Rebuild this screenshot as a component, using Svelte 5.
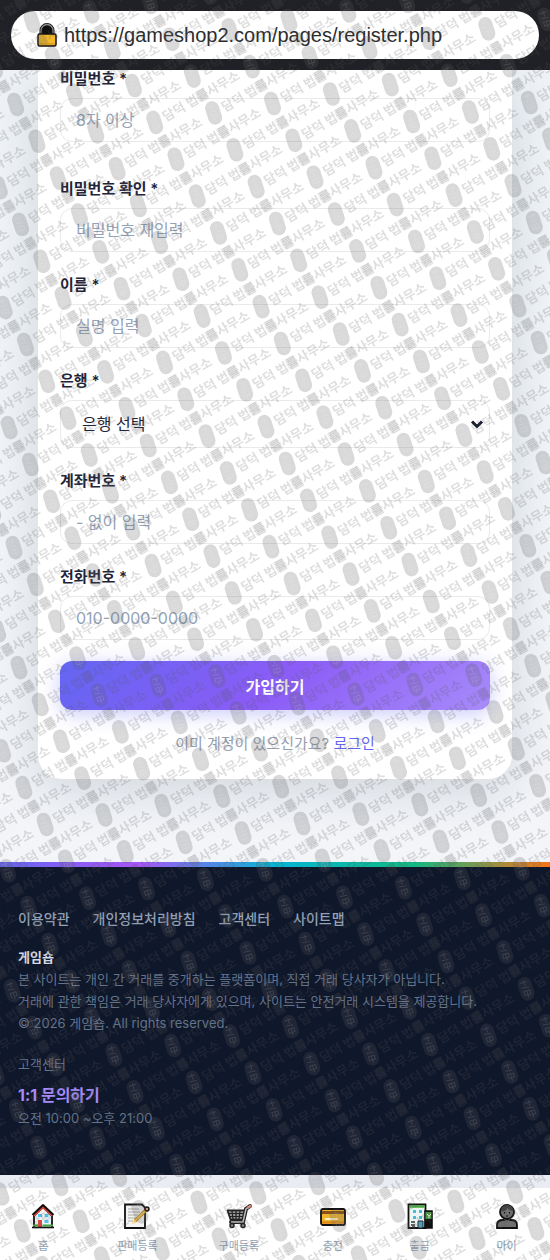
<script lang="ts">
	type Field = {
		id: string;
		label: string;
		type: string;
		placeholder?: string;
		options?: string[];
		spaced?: boolean;
	};

	const fields: Field[] = [
		{ id: "password", label: "비밀번호 *", type: "password", placeholder: "8자 이상", spaced: true },
		{ id: "password-confirm", label: "비밀번호 확인 *", type: "password", placeholder: "비밀번호 재입력" },
		{ id: "name", label: "이름 *", type: "text", placeholder: "실명 입력" },
		{ id: "bank", label: "은행 *", type: "select", options: ["은행 선택"] },
		{ id: "account", label: "계좌번호 *", type: "text", placeholder: "- 없이 입력" },
		{ id: "phone", label: "전화번호 *", type: "tel", placeholder: "010-0000-0000" },
	];

	const footerLinks = ["이용약관", "개인정보처리방침", "고객센터", "사이트맵"];

	const tabs = [
		{ icon: "home", label: "홈" },
		{ icon: "memo", label: "판매등록" },
		{ icon: "cart", label: "구매등록" },
		{ icon: "card", label: "충전" },
		{ icon: "bank", label: "출금" },
		{ icon: "user", label: "마이" },
	];

	// stamps repeat along two directions: one step right, one step down
	const stepRight = { x: 58.9, y: -9.45 };
	const stepDown = { x: 21.27, y: 36.85 };

	let width = $state(550);
	let height = $state(1260);

	function stampsFor(w: number, h: number) {
		const stamps: { x: number; y: number }[] = [];
		const reach = Math.ceil((w + h) / 30);
		for (let right = -reach; right <= reach; right++) {
			for (let down = -reach; down <= reach; down++) {
				const x = 32 + right * stepRight.x + down * stepDown.x;
				const y = 21.3 + right * stepRight.y + down * stepDown.y;
				if (x > -90 && x < w + 8 && y > -12 && y < h + 50) stamps.push({ x, y });
			}
		}
		return stamps;
	}

	const stamps = $derived(stampsFor(width, height));
</script>

<svelte:window bind:innerWidth={width} bind:innerHeight={height} />

<header class="address">
	<div class="address-pill">
		<svg class="lock" viewBox="0 0 20 24" aria-hidden="true">
			<path d="M4.5 12V7.5a5.5 5.5 0 0 1 11 0V12" fill="#111" stroke="#111" stroke-width="4" />
			<path d="M4 12V7.5a6 6 0 0 1 12 0V12" fill="none" stroke="#8b8b8b" stroke-width="1.3" />
			<rect x="1" y="11" width="18" height="12" rx="1.5" fill="#f2b92b" stroke="#111" stroke-width="1.5" />
			<path d="M2 21h16" stroke="#dfa424" stroke-width="2" />
		</svg>
		<span>https://gameshop2.com/pages/register.php</span>
	</div>
</header>

<main>
	<form class="card">
		{#each fields as field}
			<div class="field" class:spaced={field.spaced}>
				<label for={field.id}>{field.label}</label>
				{#if field.options}
					<div class="select-wrap">
						<select id={field.id}>
							{#each field.options as option}
								<option>{option}</option>
							{/each}
						</select>
						<svg class="chevron" viewBox="0 0 14 10" aria-hidden="true">
							<path d="M2 2.5l5 5 5-5" />
						</svg>
					</div>
				{:else}
					<input id={field.id} type={field.type} placeholder={field.placeholder} />
				{/if}
			</div>
		{/each}
		<button type="button" class="submit">가입하기</button>
		<p class="login">이미 계정이 있으신가요? <a href="#login">로그인</a></p>
	</form>
</main>

<footer>
	<nav class="links" aria-label="이용 안내">
		{#each footerLinks as link}
			<a href="#info">{link}</a>
		{/each}
	</nav>
	<div class="about">
		<strong>게임숍</strong>
		<p>본 사이트는 개인 간 거래를 중개하는 플랫폼이며, 직접 거래 당사자가 아닙니다.</p>
		<p>거래에 관한 책임은 거래 당사자에게 있으며, 사이트는 안전거래 시스템을 제공합니다.</p>
		<p>© 2026 게임숍. All rights reserved.</p>
	</div>
	<div class="support">
		<p>고객센터</p>
		<a href="#contact">1:1 문의하기</a>
		<p>오전 10:00 ~오후 21:00</p>
	</div>
</footer>

<nav class="tabs" aria-label="메뉴">
	{#each tabs as tab}
		<a href={`#${tab.icon}`}>
			<svg viewBox="0 0 26 26" aria-hidden="true">
				{#if tab.icon === "home"}
					<path d="M4 12v12h18V12L13 3z" fill="#eef3f5" />
					<path d="M4 24V13M22 24V13" stroke="#111" stroke-width="1.8" />
					<path d="M3 12.5L13 3l10 9.5" fill="none" stroke="#111" stroke-width="3.6" stroke-linejoin="round" />
					<path d="M4 13l9-8.5L22 13" fill="none" stroke="#e4483a" stroke-width="1.6" />
					<path d="M8 11h4v3H8zM14.5 11h4v3h-4zM14.5 17h4v3h-4z" fill="#58c4ee" />
					<path d="M8 17h4v7H8z" fill="#e4483a" />
					<path d="M3 22.5h5M12.5 22.5H23" stroke="#3fa83f" stroke-width="1.8" />
					<path d="M2 24.5h22" stroke="#111" stroke-width="1.6" />
				{:else if tab.icon === "memo"}
					<path d="M1 1.5h17l3 3V25H1z" fill="#f4f4f2" stroke="#111" stroke-width="1.8" />
					<path d="M4 6h11M4 9h12M4 12h10M4 15h8M4 18h5" stroke="#a8a8a8" />
					<path d="M22.5 6.5L11 18" stroke="#a9782a" stroke-width="3.4" />
					<path d="M22.5 6.5L10 19" stroke="#f1bc3c" stroke-width="2.4" />
					<path d="M8 21l1-4 3 3z" fill="#f3d9a0" />
					<circle cx="23" cy="6" r="2" fill="#d9928c" stroke="#111" stroke-width="1.4" />
				{:else if tab.icon === "cart"}
					<path d="M1.5 7.5H19l-2 9H4.5z" fill="#c5c5c5" stroke="#222" stroke-width="1.8" stroke-linejoin="round" />
					<path d="M3 10.5h15M4 13.5h13M6 8l1 8M10 8v8M14 8l-1 8" stroke="#222" stroke-width="1.3" />
					<path d="M24 3l-4 3-3 13H5" fill="none" stroke="#222" stroke-width="4" stroke-linecap="round" />
					<path d="M24 3l-4 3-3 13H5" fill="none" stroke="#bbb" stroke-width="1.5" />
					<path d="M22 4.5L24.5 3" stroke="#d98a80" stroke-width="2.5" stroke-linecap="round" />
					<circle cx="6" cy="22.5" r="2" fill="#888" stroke="#222" stroke-width="1.5" />
					<circle cx="17" cy="22.5" r="2" fill="#888" stroke="#222" stroke-width="1.5" />
				{:else if tab.icon === "card"}
					<rect x="1" y="6" width="24" height="16" rx="2" fill="#f1b62f" stroke="#111" stroke-width="1.8" />
					<path d="M2 9.5h22" stroke="#8a5315" stroke-width="3" />
					<path d="M2 19.5h22" stroke="#df8c1b" stroke-width="2.5" />
					<path d="M5 16h13" stroke="#fff3cf" stroke-width="2" />
				{:else if tab.icon === "bank"}
					<path d="M1.5 1.5h17V25h-17z" fill="#eef5f5" stroke="#111" stroke-width="1.8" />
					<path d="M2.5 3.5h15" stroke="#49a943" stroke-width="2.5" />
					<path d="M18 8h7v17h-7z" fill="#111" stroke="#111" stroke-width="1.6" />
					<path d="M18.5 9h6v7h-6z" fill="#4c9b40" />
					<path d="M20 11l2 2 2-2M22 13v2" fill="none" stroke="#e8f4e5" />
					<path d="M6 7h3v3H6zM12 7h3v3h-3zM6 13h3v3H6zM12 13h3v3h-3z" fill="#42bfd6" />
					<path d="M11 18h5v7h-5z" fill="#52a9cc" stroke="#222" />
					<path d="M4 22h4M4 19h4M5 24h3" stroke="#333" stroke-width="1.6" />
				{:else}
					<path d="M3 25v-3q0-5 6-5h8q6 0 6 5v3z" fill="#6f6f6f" stroke="#111" stroke-width="1.8" />
					<path d="M10 14v3q3 3 6 0v-3" fill="#5d5d5d" />
					<circle cx="13" cy="9" r="7" fill="#707070" stroke="#111" stroke-width="1.8" />
					<path d="M6.5 8q5 1 7-3 2 3 6 3-1-6-6.5-6T6.5 8z" fill="#444" />
					<path d="M10.5 9v1.5M15.5 9v1.5M12 13h2" stroke="#111" stroke-width="1.2" />
				{/if}
			</svg>
			<span>{tab.label}</span>
		</a>
	{/each}
</nav>

<svg class="watermark" aria-hidden="true">
	{#each stamps as stamp}
		<g transform={`translate(${stamp.x} ${stamp.y})`}>
			<g transform="rotate(-18)">
				<rect class="seal" x="-7" y="-12" width="14" height="24" rx="7" />
				<path class="seal-mark" d="M-4 -7h7M0 -9v6M-4 -2l7 1M-3 2h6v4h-6zM0 2v7" />
			</g>
			<g transform="rotate(-30)">
				<text class="mark" x="10" y="5">담덕 법률사무소</text>
				<rect class="block" x="49" y="-6" width="11" height="11" />
			</g>
		</g>
	{/each}
</svg>

<style>
	:global(body) {
		background: #f1f4f9;
		color: #1e2338;
		font-family: Inter, "Noto Sans CJK KR", sans-serif;
	}

	a {
		text-decoration: none;
	}

	p {
		margin: 0;
	}

	.address {
		position: sticky;
		top: 0;
		z-index: 2;
		padding: 11px;
		background: #202126;
	}

	.address-pill {
		display: flex;
		align-items: center;
		gap: 7px;
		height: 48px;
		box-sizing: border-box;
		padding: 0 26px;
		border-radius: 24px;
		background: #fff;
		color: #2c2c2e;
		font-family: "Liberation Sans", Arial, sans-serif;
		font-size: 20px;
	}

	.lock {
		width: 20px;
		height: 24px;
	}

	main {
		padding: 0 38px 83px;
		overflow: hidden;
		background: linear-gradient(#eff3f7, #f3f5f9);
	}

	.card {
		padding: 0 22px 25px;
		border-radius: 0 0 24px 24px;
		background: #fff;
		box-shadow: 0 12px 50px rgba(30, 45, 65, 0.15);
	}

	.field + .field {
		margin-top: 24px;
	}

	.field.spaced + .field {
		margin-top: 38px;
	}

	label {
		display: block;
		margin-bottom: 10px;
		font-size: 15px;
		font-weight: 600;
		line-height: 18px;
	}

	input,
	select {
		display: block;
		width: 100%;
		height: 44px;
		box-sizing: border-box;
		padding: 0 15px;
		border: 1px solid #e8eaed;
		border-radius: 12px;
		background: #fff;
		color: #1e2338;
		font: inherit;
		font-size: 16px;
	}

	input::placeholder {
		color: #94a3b8;
		opacity: 1;
	}

	.select-wrap {
		position: relative;
	}

	select {
		height: 48px;
		padding: 0 40px 0 21px;
		appearance: none;
	}

	.chevron {
		position: absolute;
		top: 50%;
		right: 6px;
		width: 14px;
		height: 10px;
		transform: translateY(-50%);
		fill: none;
		stroke: #151a2c;
		stroke-width: 3;
	}

	.submit {
		display: block;
		width: 100%;
		height: 49px;
		margin-top: 21px;
		border: 0;
		border-radius: 12px;
		background: linear-gradient(135deg, #6366f1, #8b5cf6 50%, #a78bfa);
		box-shadow: 0 4px 20px rgba(99, 102, 241, 0.35);
		color: #fff;
		font: inherit;
		font-size: 16px;
		font-weight: 700;
	}

	.login {
		margin-top: 24px;
		color: #94a0b0;
		font-size: 15px;
		line-height: 20px;
		text-align: center;
	}

	.login a {
		color: #6366f1;
	}

	footer {
		padding: 41px 18px 46px;
		border-top: 5px solid;
		border-image: linear-gradient(90deg, #6366f1, #a855f7 25%, #06b6d4 50%, #10b981 75%, #f97316) 1;
		background: #0f172a;
		color: #64748b;
		font-size: 13px;
		line-height: 22px;
	}

	.links {
		display: flex;
		flex-wrap: wrap;
		gap: 23px;
		margin-bottom: 16px;
	}

	.links a {
		color: #94a3b8;
		font-size: 14px;
		font-weight: 500;
	}

	.about strong {
		display: block;
		color: #d5dbe5;
	}

	.support {
		margin-top: 19px;
	}

	.support a {
		display: block;
		padding-top: 8px;
		color: #a78bfa;
		font-size: 16px;
		font-weight: 700;
		line-height: 24px;
	}

	.tabs {
		display: flex;
		justify-content: space-around;
		padding: 15px 0 6px;
		border-top: 13px solid #e9ecf2;
		background: #fff;
	}

	.tabs a {
		display: flex;
		flex-direction: column;
		align-items: center;
		gap: 9px;
		color: #94a3b8;
		font-size: 11px;
		line-height: 16px;
	}

	.tabs svg {
		width: 26px;
		height: 26px;
	}

	.watermark {
		position: fixed;
		inset: 0;
		z-index: 3;
		width: 100%;
		height: 100%;
		pointer-events: none;
	}

	.seal {
		fill: rgba(90, 90, 90, 0.23);
	}

	.seal-mark {
		fill: none;
		stroke: rgba(255, 255, 255, 0.12);
	}

	.mark {
		fill: rgba(90, 90, 90, 0.2);
		font-family: "Noto Sans CJK KR", sans-serif;
		font-size: 13px;
		font-weight: 700;
	}

	.block {
		fill: rgba(90, 90, 90, 0.1);
	}
</style>
